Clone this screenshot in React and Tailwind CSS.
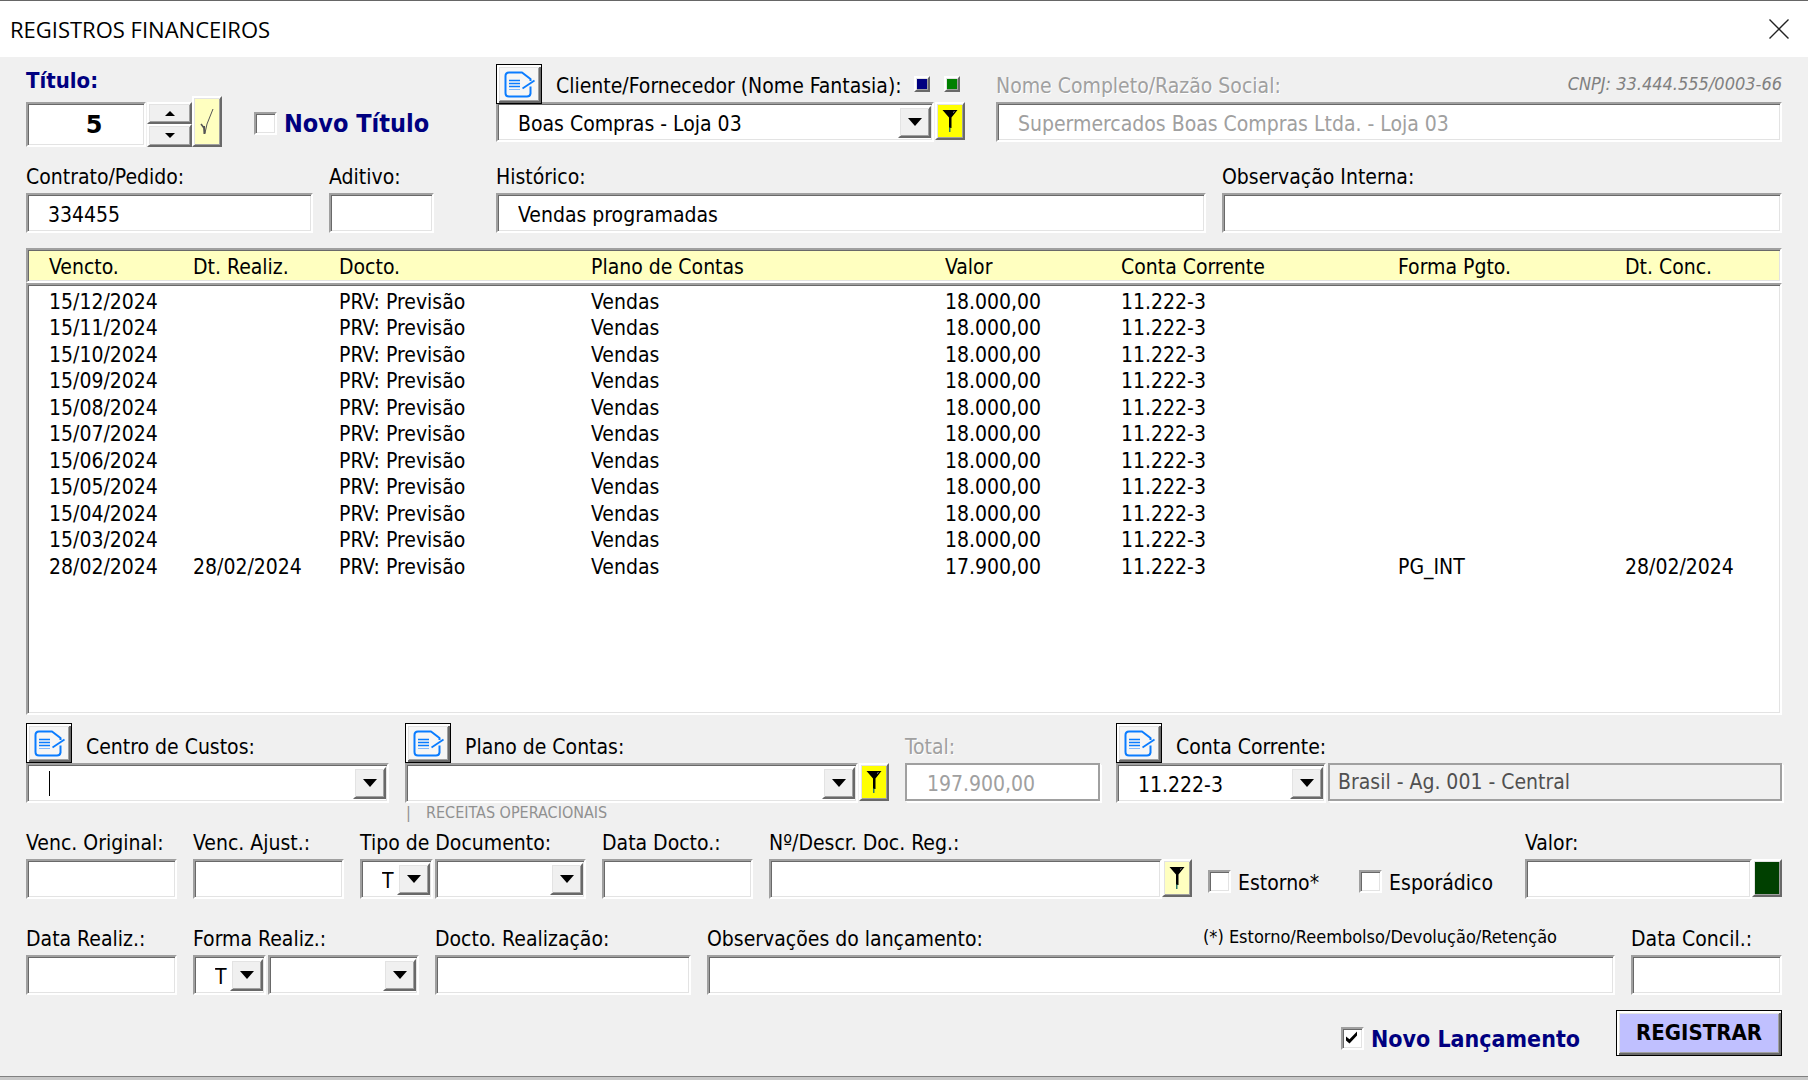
import { useState } from 'react';
import clsx from 'clsx';

const SUNKEN =
  'border-2 border-t-[#a0a0a0] border-l-[#a0a0a0] border-r-white border-b-white shadow-[inset_1px_1px_#696969,inset_-1px_-1px_#e3e3e3]';
const RAISED =
  'border-2 border-t-white border-l-white border-r-[#696969] border-b-[#696969] shadow-[inset_1px_1px_#e3e3e3,inset_-1px_-1px_#a0a0a0]';
const FRAMED =
  'border border-black shadow-[inset_2px_2px_#fff,inset_-2px_-2px_#696969,inset_3px_3px_#e3e3e3,inset_-3px_-3px_#a0a0a0]';
const COLS = 'grid grid-cols-[144px_146px_252px_354px_176px_277px_227px_1fr]';

const columns = ['Vencto.', 'Dt. Realiz.', 'Docto.', 'Plano de Contas', 'Valor', 'Conta Corrente', 'Forma Pgto.', 'Dt. Conc.'];

const forecast = ['12', '11', '10', '09', '08', '07', '06', '05', '04', '03'].map((month) => [
  `15/${month}/2024`, '', 'PRV: Previsão', 'Vendas', '18.000,00', '11.222-3', '', '',
]);
const rows = [
  ...forecast,
  ['28/02/2024', '28/02/2024', 'PRV: Previsão', 'Vendas', '17.900,00', '11.222-3', 'PG_INT', '28/02/2024'],
];

export default function App() {
  const [novoTitulo, setNovoTitulo] = useState(false);
  const [estorno, setEstorno] = useState(false);
  const [esporadico, setEsporadico] = useState(false);
  const [novoLancamento, setNovoLancamento] = useState(true);

  return (
    <div className="flex min-h-screen flex-col border-t border-[#666] bg-[#f0f0f0] font-['DejaVu_Sans_Condensed','DejaVu_Sans',sans-serif] text-[21px] leading-6 text-black">
      <header className="flex h-14 shrink-0 items-center justify-between bg-white pl-[10px] pr-[18px]">
        <h1 className="font-['Open_Sans','Noto_Sans',sans-serif] text-[22px]">REGISTROS FINANCEIROS</h1>
        <button type="button" aria-label="Fechar" className="p-px">
          <svg width="20" height="20" viewBox="0 0 20 20" stroke="#222" strokeWidth="1.4" fill="none">
            <path d="M0.5 0.5 19.5 19.5M19.5 0.5 0.5 19.5" />
          </svg>
        </button>
      </header>

      <main className="flex grow flex-col pl-[26px] pr-[26px] pb-5">
        <section className="flex items-start pt-[7px]">
          <div className="w-[470px] shrink-0">
            <label htmlFor="titulo" className="mb-1 block text-[22px] font-bold leading-[34px] text-[#000080]">Título:</label>
            <div className="flex items-end">
              <input id="titulo" defaultValue="5" className={clsx(SUNKEN, "h-[45px] w-[120px] bg-white pl-4 text-center font-['DejaVu_Sans',sans-serif] text-[24px] font-bold")} />
              <div className="ml-px flex w-[45px] flex-col">
                <button type="button" aria-label="Próximo título" className={clsx(RAISED, 'flex h-[22px] items-center justify-center')}>
                  <Triangle up small />
                </button>
                <button type="button" aria-label="Título anterior" className={clsx(RAISED, 'flex h-[23px] items-center justify-center')}>
                  <Triangle small />
                </button>
              </div>
              <button type="button" aria-label="Confirmar título" className={clsx(RAISED, '-mt-[6px] flex h-[51px] w-[30px] items-center justify-center bg-[#ffffc0]')}>
                <svg width="14" height="28" viewBox="0 0 14 28" fill="none" stroke="#555">
                  <path d="M1 16 4 20" strokeWidth="1.5" />
                  <path d="M4.5 26 4 18" strokeWidth="2" />
                  <path d="M5 25 7 16 13 1" strokeWidth="1" />
                </svg>
              </button>
              <div className="mb-[11px] ml-8">
                <Check id="novo-titulo" checked={novoTitulo} onChange={setNovoTitulo} className="text-[25px] font-bold text-[#000080]">Novo Título</Check>
              </div>
            </div>
          </div>

          <div className="w-[469px] shrink-0">
            <div className="flex h-[38px] items-start">
              <EditButton label="Editar cliente" />
              <label htmlFor="cliente" className="ml-[14px] self-end whitespace-nowrap pb-1">Cliente/Fornecedor (Nome Fantasia):</label>
              <div className="ml-auto mr-[5px] flex gap-[14px] pt-3">
                <button type="button" aria-label="Cliente" className={clsx(RAISED, 'size-4 bg-[#000080]')} />
                <button type="button" aria-label="Fornecedor" className={clsx(RAISED, 'size-4 bg-[#008000]')} />
              </div>
            </div>
            <div className="flex gap-px">
              <Combo id="cliente" value="Boas Compras - Loja 03" className="grow" />
              <FilterButton label="Filtrar cliente" className="bg-[#ffff00]" />
            </div>
          </div>

          <div className="ml-[31px] grow">
            <div className="flex h-[38px] items-end justify-between">
              <label htmlFor="razao" className="pb-1 text-[#a0a0a0] [text-shadow:1px_1px_0_#fff]">Nome Completo/Razão Social:</label>
              <span className="pb-2 text-[18px] italic leading-5 text-[#808080]">CNPJ: 33.444.555/0003-66</span>
            </div>
            <TextBox id="razao" value="Supermercados Boas Compras Ltda. - Loja 03" className="w-full text-[#a0a0a0]" />
          </div>
        </section>

        <section className="mt-[18px] flex">
          <div className="flex w-[470px] shrink-0 gap-4">
            <Field id="contrato" label="Contrato/Pedido:" className="w-[287px]">
              <TextBox id="contrato" value="334455" className="w-full" />
            </Field>
            <Field id="aditivo" label="Aditivo:" className="w-[105px]">
              <TextBox id="aditivo" className="w-full" />
            </Field>
          </div>
          <Field id="historico" label="Histórico:" className="grow">
            <TextBox id="historico" value="Vendas programadas" className="w-full" />
          </Field>
          <Field id="observacao" label="Observação Interna:" className="ml-4 w-[560px]">
            <TextBox id="observacao" className="w-full" />
          </Field>
        </section>

        <table className="mt-[15px] flex grow flex-col">
          <thead className={clsx(SUNKEN, 'block bg-[#ffffc0] pl-[21px]')}>
            <tr className={COLS}>
              {columns.map((name) => (
                <th key={name} className="pt-[5px] pb-px text-left font-normal leading-[25px]">{name}</th>
              ))}
            </tr>
          </thead>
          <tbody className={clsx(SUNKEN, 'block grow bg-white pt-1 pl-[21px]')}>
            {rows.map((row) => (
              <tr key={row[0]} className={clsx(COLS, 'h-[26px] even:h-[27px]')}>
                {row.map((cell, i) => (
                  <td key={columns[i]} className="leading-[26px]">{cell}</td>
                ))}
              </tr>
            ))}
          </tbody>
        </table>

        <section className="mt-2 flex gap-4">
          <div className="w-[363px] shrink-0">
            <EditLabel id="centro" button="Editar centro de custos">Centro de Custos:</EditLabel>
            <Combo id="centro" caret />
          </div>
          <div className="w-[484px] shrink-0">
            <EditLabel id="plano" button="Editar plano de contas">Plano de Contas:</EditLabel>
            <div className="flex gap-px">
              <Combo id="plano" className="grow" />
              <FilterButton label="Filtrar plano" className="bg-[#ffff00]" />
            </div>
          </div>
          <div className="w-[195px] shrink-0 pt-3">
            <label htmlFor="total" className="mb-1 block text-[#a0a0a0] [text-shadow:1px_1px_0_#fff]">Total:</label>
            <FlatBox id="total" value="197.900,00" className="w-full bg-white pl-5 pt-1 text-[#a0a0a0]" />
          </div>
          <div className="grow">
            <EditLabel id="conta" button="Editar conta corrente">Conta Corrente:</EditLabel>
            <div className="flex gap-[2px]">
              <Combo id="conta" value="11.222-3" className="w-[210px] shrink-0" />
              <FlatBox id="agencia" label="Agência" value="Brasil - Ag. 001 - Central" className="min-w-0 grow bg-transparent pl-2 text-[#505050]" />
            </div>
          </div>
        </section>

        <div className="mb-2 h-5 pl-[380px] text-[16px] leading-5 text-[#909090]">
          <span className="inline-block w-5">|</span>RECEITAS OPERACIONAIS
        </div>

        <section className="flex gap-4">
          <Field id="venc-original" label="Venc. Original:" className="w-[151px]">
            <TextBox id="venc-original" className="w-full" />
          </Field>
          <Field id="venc-ajust" label="Venc. Ajust.:" className="w-[151px]">
            <TextBox id="venc-ajust" className="w-full" />
          </Field>
          <Field id="tipo" label="Tipo de Documento:">
            <div className="flex gap-[2px]">
              <Combo id="tipo" value="T" className="w-[73px]" />
              <Combo id="tipo-doc" label="Documento" className="w-[151px]" />
            </div>
          </Field>
          <Field id="data-docto" label="Data Docto.:" className="w-[151px]">
            <TextBox id="data-docto" className="w-full" />
          </Field>
          <Field id="descr" label="Nº/Descr. Doc. Reg.:" className="min-w-0 grow">
            <div className="flex">
              <TextBox id="descr" className="min-w-0 grow" />
              <FilterButton label="Filtrar documento" className="bg-[#ffffc0]" />
            </div>
          </Field>
          <div className="flex w-[301px] shrink-0 gap-10 pt-[33px]">
            <Check id="estorno" checked={estorno} onChange={setEstorno}>Estorno*</Check>
            <Check id="esporadico" checked={esporadico} onChange={setEsporadico}>Esporádico</Check>
          </div>
          <Field id="valor" label="Valor:" className="w-[257px]">
            <div className="flex">
              <TextBox id="valor" className="min-w-0 grow" />
              <button type="button" aria-label="Crédito" className={clsx(RAISED, 'h-[38px] w-[30px] shrink-0 bg-[#004000]')} />
            </div>
          </Field>
        </section>

        <section className="mt-7 flex gap-4">
          <Field id="data-realiz" label="Data Realiz.:" className="w-[151px]">
            <TextBox id="data-realiz" className="w-full" />
          </Field>
          <Field id="forma" label="Forma Realiz.:">
            <div className="flex gap-[2px]">
              <Combo id="forma" value="T" className="w-[73px]" />
              <Combo id="forma-doc" label="Forma" className="w-[151px]" />
            </div>
          </Field>
          <Field id="docto-realiz" label="Docto. Realização:" className="w-[256px]">
            <TextBox id="docto-realiz" className="w-full" />
          </Field>
          <div className="min-w-0 grow">
            <div className="mb-1 flex justify-between">
              <label htmlFor="obs">Observações do lançamento:</label>
              <span className="mr-[58px] text-[18px] leading-5">(*) Estorno/Reembolso/Devolução/Retenção</span>
            </div>
            <TextBox id="obs" className="w-full" />
          </div>
          <Field id="data-concil" label="Data Concil.:" className="w-[151px]">
            <TextBox id="data-concil" className="w-full" />
          </Field>
        </section>

        <footer className="mt-[15px] flex justify-end gap-9">
          <div className="pt-[15px]">
            <Check id="novo-lancamento" checked={novoLancamento} onChange={setNovoLancamento} className="text-[23px] font-bold text-[#000080]">Novo Lançamento</Check>
          </div>
          <button type="button" className={clsx(FRAMED, 'h-[46px] w-[166px] bg-[#c0c0ff] text-[22px] font-bold')}>REGISTRAR</button>
        </footer>
      </main>
      <div className="h-1 shrink-0 border-t border-[#808080] bg-[#c8c8c8]" />
    </div>
  );
}

function Field({ id, label, className, children }) {
  return (
    <div className={clsx('shrink-0', className)}>
      <label htmlFor={id} className="mb-1 block whitespace-nowrap">{label}</label>
      {children}
    </div>
  );
}

function TextBox({ id, value = '', className }) {
  return <input id={id} type="text" defaultValue={value} className={clsx(SUNKEN, 'h-10 bg-white pl-5 pt-1', className)} />;
}

function FlatBox({ id, label, value, className }) {
  return (
    <input
      id={id}
      aria-label={label}
      readOnly
      defaultValue={value}
      className={clsx('h-[38px] border-2 border-[#a0a0a0] shadow-[1px_1px_#fff,2px_2px_#fff]', className)}
    />
  );
}

function Combo({ id, label, value = '', caret, className }) {
  return (
    <div className={clsx('relative', className)}>
      <select
        id={id}
        aria-label={label}
        defaultValue={value}
        className={clsx(SUNKEN, 'block h-10 w-full appearance-none bg-white pl-5 pt-1')}
      >
        <option>{value}</option>
      </select>
      <span className={clsx(RAISED, 'pointer-events-none absolute right-[3px] top-1 flex h-8 w-[33px] items-center justify-center bg-[#f0f0f0]')}>
        <Triangle />
      </span>
      {caret && <span className="pointer-events-none absolute left-[23px] top-2 h-[25px] w-px bg-black" />}
    </div>
  );
}

function Check({ id, checked, onChange, className, children }) {
  return (
    <div className="flex items-center gap-[7px]">
      <span className="relative flex">
        <input
          id={id}
          type="checkbox"
          checked={checked}
          onChange={(e) => onChange(e.target.checked)}
          className={clsx(SUNKEN, 'size-[23px] appearance-none bg-white')}
        />
        {checked && (
          <svg width="13" height="13" viewBox="0 0 13 13" className="pointer-events-none absolute left-1 top-1">
            <path d="M1 5.5V9.5L4.5 12.5 12 4.5V0.5L4.5 8.2Z" fill="#000" />
          </svg>
        )}
      </span>
      <label htmlFor={id} className={clsx('whitespace-nowrap pt-[2px]', className)}>{children}</label>
    </div>
  );
}

function EditLabel({ id, button, children }) {
  return (
    <div className="flex h-10 items-start">
      <EditButton label={button} />
      <label htmlFor={id} className="ml-[14px] self-end pb-1">{children}</label>
    </div>
  );
}

function EditButton({ label }) {
  return (
    <button type="button" aria-label={label} className={clsx(FRAMED, 'relative z-10 flex h-10 w-[46px] shrink-0 items-center justify-center bg-[#f6f6f6]')}>
      <svg width="32" height="28" viewBox="0 0 32 28" fill="none" stroke="#0a7cff" className="shrink-0">
        <path d="M27.5 16.5V23.5Q27 26.5 24 26.5H6Q2.5 26.5 2.5 23V6Q2.5 2.5 6 2.5H19L27.5 9V11" strokeWidth="2" strokeLinejoin="round" />
        <path d="M6 10.5H17M6 13.5H17M6 16.5H17" strokeWidth="1.3" />
        <path d="M6 19.5H17" strokeWidth="1" opacity=".5" />
        <path d="M19.5 18.5 31.5 10.5" strokeWidth="1.8" />
      </svg>
    </button>
  );
}

function FilterButton({ label, className }) {
  return (
    <button type="button" aria-label={label} className={clsx(RAISED, 'flex h-[38px] w-[30px] shrink-0 items-center justify-center', className)}>
      <svg width="16" height="24" viewBox="0 0 16 24">
        <path d="M0.5 1H15.5L9.5 8.5V19H7V8.5Z" fill="#000" />
        <path d="M7 18.5H8.5V23H7Z" fill="#2a7a6a" />
        <path d="M11 3.5 12.5 2.5" stroke="#999" />
      </svg>
    </button>
  );
}

function Triangle({ up, small }) {
  return (
    <svg width={small ? 10 : 14} height={small ? 5 : 8} viewBox="0 0 14 8" preserveAspectRatio="none" className={clsx(up && 'rotate-180')}>
      <path d="M0 0H14L7 8Z" fill="#000" />
    </svg>
  );
}
